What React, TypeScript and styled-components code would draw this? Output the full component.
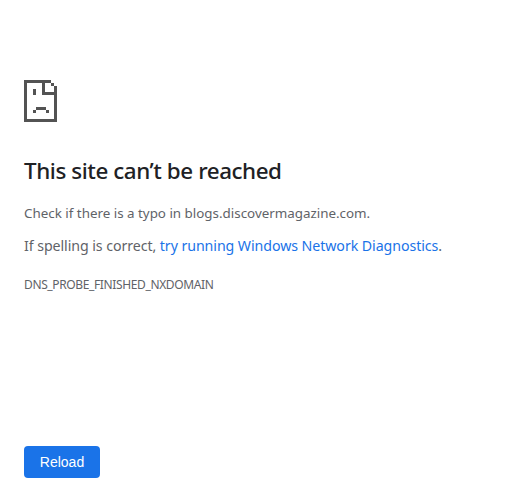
import React from 'react';
import styled, { createGlobalStyle } from 'styled-components';

function App() {
  return (
    <>
      <GlobalStyle />
      <StyledPage>
        <SadPageIcon />
        <StyledTitle>This site can’t be reached</StyledTitle>
        <StyledSummary>Check if there is a typo in blogs.discovermagazine.com.</StyledSummary>
        <StyledSuggestion>
          If spelling is correct, <StyledLink href="#">try running Windows Network Diagnostics</StyledLink>.
        </StyledSuggestion>
        <StyledErrorCode>DNS_PROBE_FINISHED_NXDOMAIN</StyledErrorCode>
        <StyledButtons>
          <StyledReload type="button">Reload</StyledReload>
        </StyledButtons>
      </StyledPage>
    </>
  );
}

// Drawn on an 11 x 14 grid of square cells
function SadPageIcon() {
  return (
    <StyledIcon viewBox="0 0 11 14" shapeRendering="crispEdges" aria-hidden="true">
      <path d="M0 0h9v1h-2v3h3v-2h1v12h-11zM1 1v12h9v-8h-4v-4z" fillRule="evenodd" />
      <path d="M9 1h1v1h-1zM3 3h1v2h-1zM4 9h3.333v1h-3.333zM3 10h1v1h-1zM7.333 10h1v1h-1z" />
    </StyledIcon>
  );
}

export default App;

const GlobalStyle = createGlobalStyle`
  body {
    margin: 0;
    background-color: #fff;
  }
`;

const StyledPage = styled.div`
  display: flex;
  flex-direction: column;
  align-items: flex-start;
  box-sizing: border-box;
  height: 500px;
  padding: 80px 24px 22px;
  color: #5f6368;
  font-family: "Segoe UI", "Noto Sans", sans-serif;
  white-space: nowrap;
`;

const StyledIcon = styled.svg`
  display: block;
  width: 33px;
  height: 42px;
  fill: #535353;
`;

const StyledTitle = styled.h1`
  margin: 34px 0 0;
  color: #202124;
  font-size: 22.4px;
  font-weight: 500;
  letter-spacing: -0.43px;
  line-height: 30px;
`;

const StyledSummary = styled.p`
  margin: 17px 0 0;
  font-size: 13.4px;
  letter-spacing: -0.01px;
  line-height: 20px;
`;

const StyledSuggestion = styled.p`
  margin: 12px 0 0;
  font-size: 14.2px;
  letter-spacing: -0.07px;
  line-height: 22px;
`;

const StyledLink = styled.a`
  color: #1a73e8;
  text-decoration: none;
`;

const StyledErrorCode = styled.div`
  margin-top: 20px;
  font-size: 12px;
  letter-spacing: -0.37px;
  line-height: 16px;
`;

const StyledButtons = styled.div`
  margin-top: auto;
`;

const StyledReload = styled.button`
  display: block;
  width: 76px;
  height: 32px;
  padding: 0;
  border: 0;
  border-radius: 4px;
  background-color: #1a73e8;
  color: #fff;
  font-family: "Liberation Sans", Arial, sans-serif;
  font-size: 14px;
`;
